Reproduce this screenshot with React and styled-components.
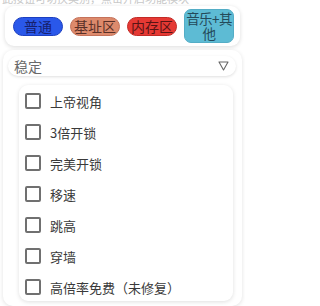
import React from "react";
import styled, { createGlobalStyle } from "styled-components";

const Global = createGlobalStyle`
  html, body { margin: 0; padding: 0; background: #ffffff; }
  body { font-family: "Noto Sans CJK SC", "Noto Sans", sans-serif; overflow: hidden; }
`;

const Page = styled.div`
  width: 245px;
  height: 306px;
  overflow: hidden;
  display: flex;
  flex-direction: column;
`;

const HintWrap = styled.div`
  height: 5px;
  overflow: hidden;
  padding-left: 2px;
`;

const Hint = styled.div`
  font-size: 11px;
  line-height: 11px;
  color: #c8c8c8;
  margin-top: -7px;
  white-space: nowrap;
`;

const TabCard = styled.div`
  margin: 1px 5px 0 5px;
  height: 40px;
  box-sizing: border-box;
  border-radius: 9px;
  background: #fff;
  box-shadow: 0 1px 4px rgba(0, 0, 0, 0.14);
  display: flex;
  align-items: center;
  gap: 7px;
  padding: 0 4px 0 8px;
`;

const Tab = styled.div`
  width: 50px;
  height: ${(p) => (p.$tall ? "34px" : "19px")};
  box-sizing: border-box;
  border-radius: ${(p) => (p.$tall ? "7px" : "10px")};
  background: ${(p) => p.$bg};
  border: 1.5px solid ${(p) => p.$border};
  color: ${(p) => p.$fg};
  font-size: ${(p) => (p.$tall ? "13.5px" : "14px")};
  line-height: 15px;
  display: flex;
  align-items: center;
  justify-content: center;
  text-align: center;
  white-space: ${(p) => (p.$tall ? "normal" : "nowrap")};
  word-break: break-all;
  letter-spacing: ${(p) => (p.$tall ? "-0.6px" : "0")};
  padding: 0;
`;

const MainCard = styled.div`
  margin: 4px 3px 0 3px;
  flex: 1;
  border-radius: 10px;
  background: #fff;
  box-shadow: 0 1px 4px rgba(0, 0, 0, 0.12);
  padding: 6px 6px 5px 5px;
  display: flex;
  flex-direction: column;
`;

const Select = styled.div`
  height: 20px;
  border-radius: 10px;
  background: #fff;
  box-shadow: 0 1px 3px rgba(0, 0, 0, 0.13);
  display: flex;
  align-items: center;
  justify-content: space-between;
  padding: 0 7px 0 6px;
  font-size: 14px;
  color: #6a6a6a;
`;

const Arrow = styled.svg`
  width: 11px;
  height: 10px;
`;

const ListCard = styled.div`
  margin: 9px 3px 0 11px;
  flex: 1;
  border-radius: 9px;
  background: #fff;
  box-shadow: 0 1px 4px rgba(0, 0, 0, 0.13);
  padding: 8px 0 0 6px;
  display: flex;
  flex-direction: column;
  gap: 15px;
`;

const Row = styled.label`
  display: flex;
  align-items: center;
  height: 16px;
  gap: 9px;
  font-size: 13px;
  color: #3a3a3a;
`;

const Box = styled.span`
  width: 16px;
  height: 16px;
  box-sizing: border-box;
  border: 2px solid #707070;
  border-radius: 2px;
  flex-shrink: 0;
`;

const tabs = [
  { t: "普通", bg: "#2a58ea", border: "#1c3fc0", fg: "#16206e" },
  { t: "基址区", bg: "#dd8a6c", border: "#c5725a", fg: "#5a3028" },
  { t: "内存区", bg: "#e63934", border: "#c22a26", fg: "#5a1414" },
  { t: "音乐+其他", bg: "#5dbbd4", border: "#53adc6", fg: "#244a5a", tall: true },
];

const items = ["上帝视角", "3倍开锁", "完美开锁", "移速", "跳高", "穿墙", "高倍率免费（未修复）"];

export default function App() {
  return (
    <>
      <Global />
      <Page>
        <HintWrap>
          <Hint>此按钮可切换类别，点击开启功能模块</Hint>
        </HintWrap>
        <TabCard>
          {tabs.map((b) => (
            <Tab key={b.t} $bg={b.bg} $border={b.border} $fg={b.fg} $tall={b.tall}>
              {b.t}
            </Tab>
          ))}
        </TabCard>
        <MainCard>
          <Select>
            <span>稳定</span>
            <Arrow viewBox="0 0 11 10">
              <path d="M1 1 H10 L5.5 9 Z" fill="none" stroke="#666" strokeWidth="1.1" strokeLinejoin="round" />
            </Arrow>
          </Select>
          <ListCard>
            {items.map((i) => (
              <Row key={i}>
                <Box />
                {i}
              </Row>
            ))}
          </ListCard>
        </MainCard>
      </Page>
    </>
  );
}
